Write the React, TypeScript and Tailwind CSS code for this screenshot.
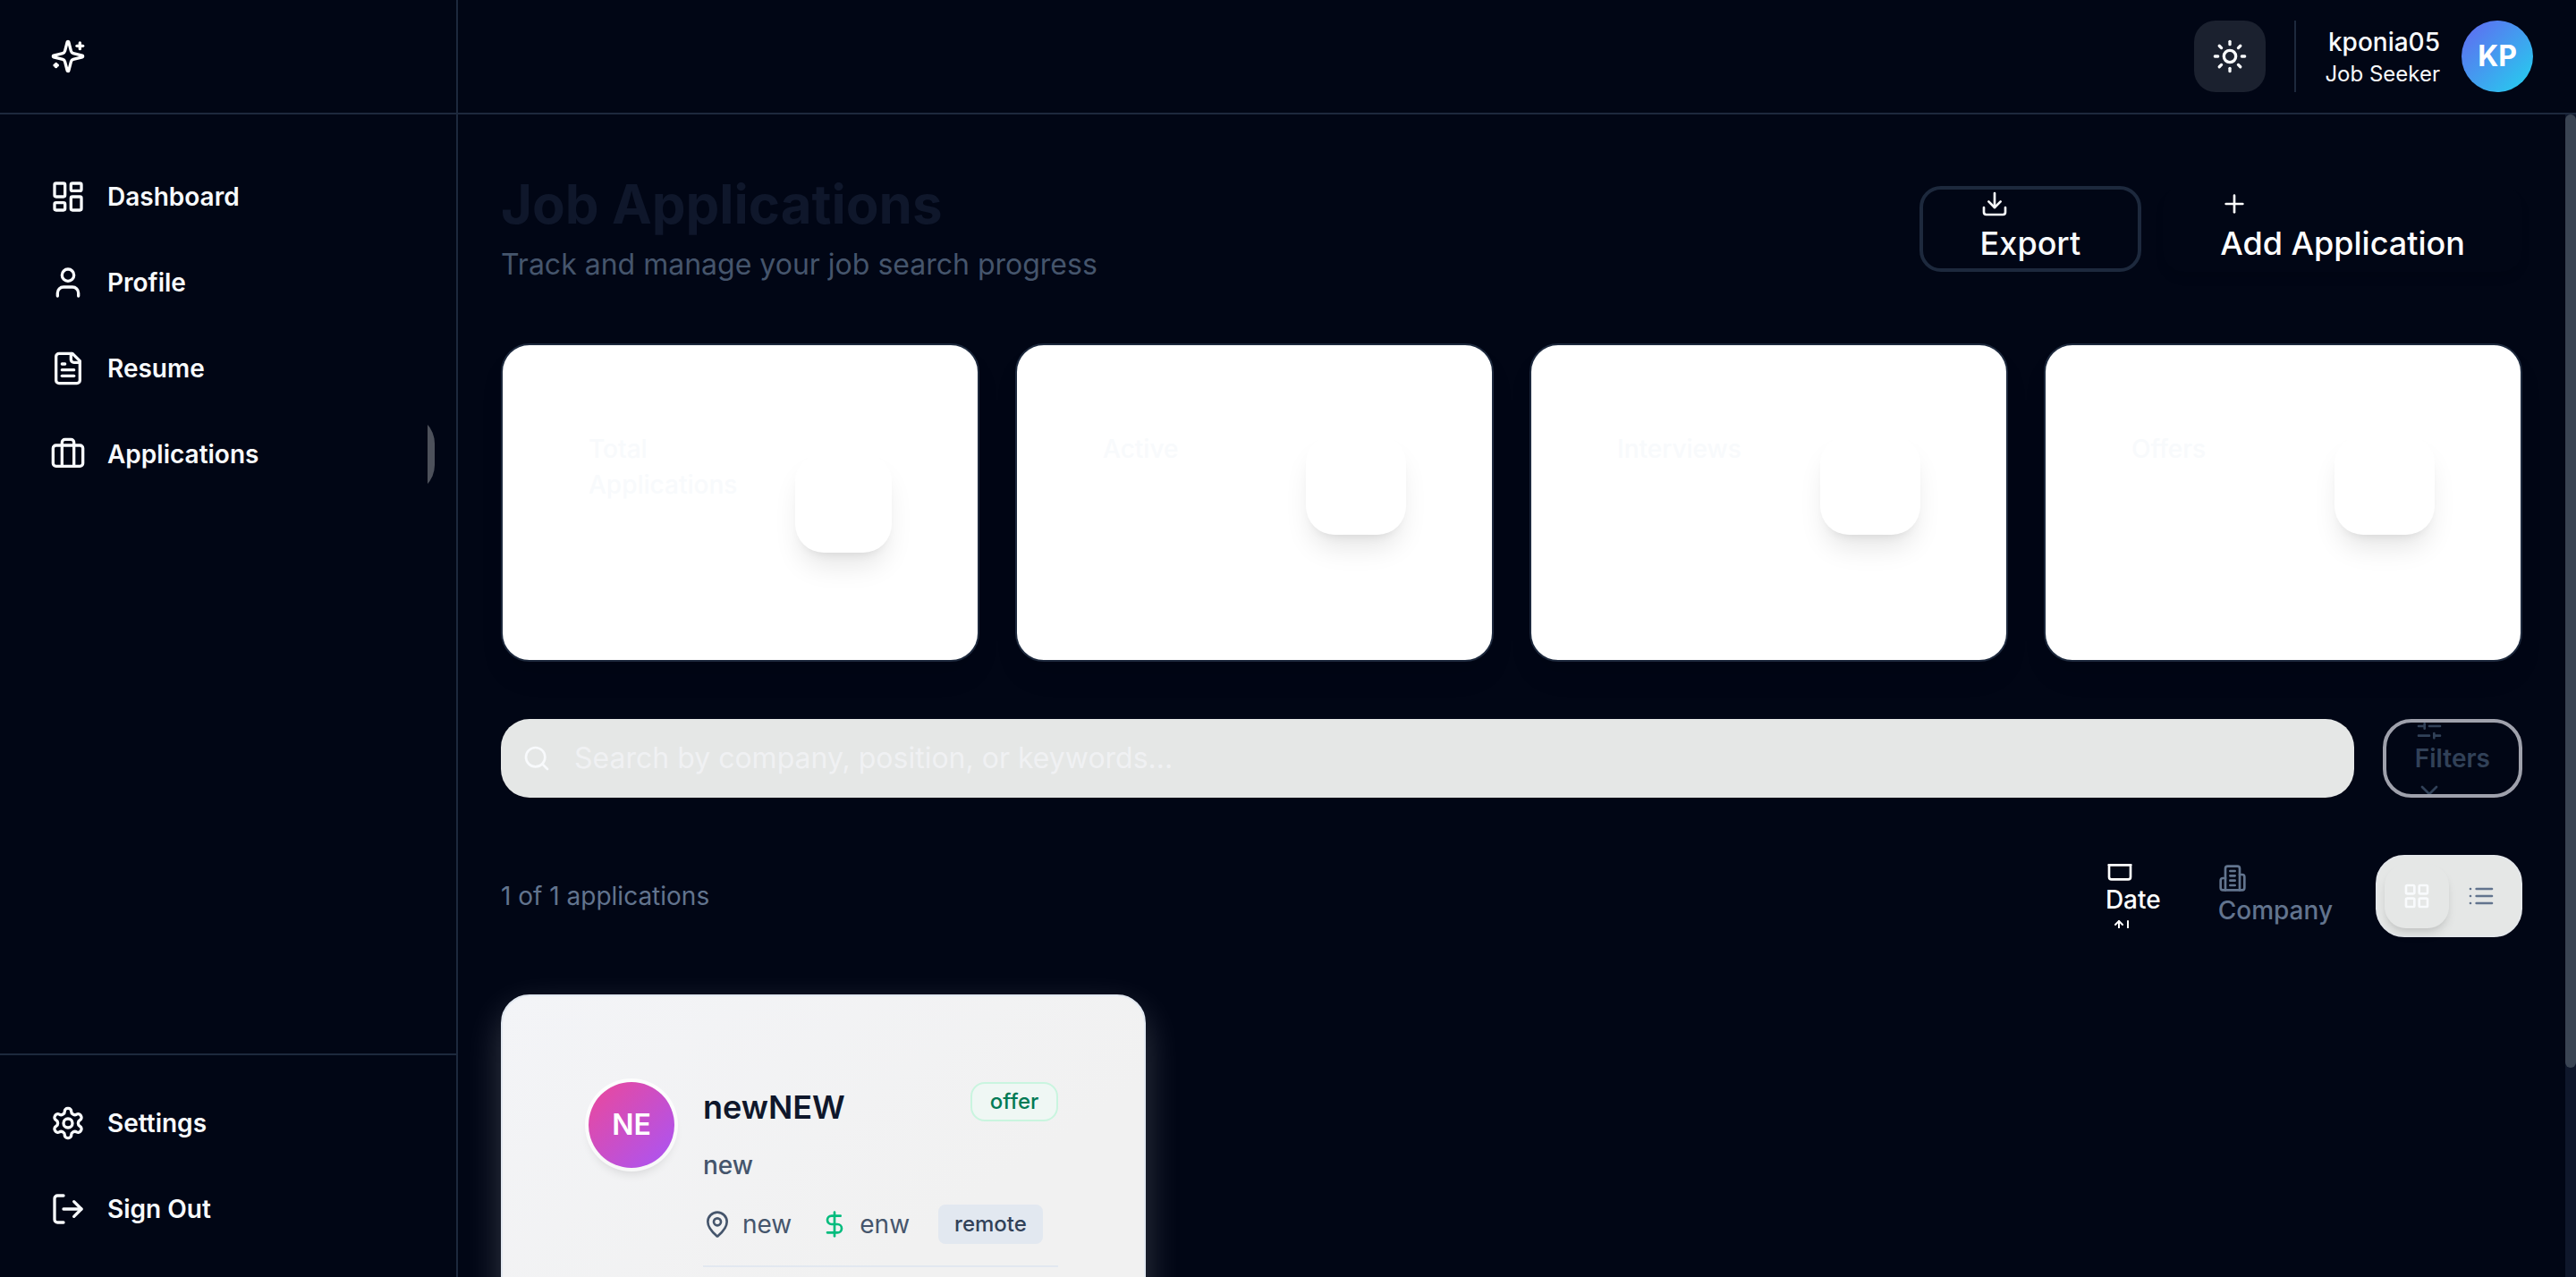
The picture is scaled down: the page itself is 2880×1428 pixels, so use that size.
import type { ReactNode } from "react";

type IconProps = { className?: string; children?: ReactNode };

function Icon({ className = "size-8", children }: IconProps) {
  return (
    <svg
      aria-hidden="true"
      viewBox="0 0 24 24"
      fill="none"
      stroke="currentColor"
      strokeWidth="2"
      strokeLinecap="round"
      strokeLinejoin="round"
      className={`shrink-0 ${className}`}
    >
      {children}
    </svg>
  );
}

const navIcons = {
  dashboard: (
    <>
      <rect width="7" height="9" x="3" y="3" rx="1" />
      <rect width="7" height="5" x="14" y="3" rx="1" />
      <rect width="7" height="9" x="14" y="12" rx="1" />
      <rect width="7" height="5" x="3" y="16" rx="1" />
    </>
  ),
  profile: (
    <>
      <path d="M19 21v-2a4 4 0 0 0-4-4H9a4 4 0 0 0-4 4v2" />
      <circle cx="12" cy="7" r="4" />
    </>
  ),
  resume: (
    <>
      <path d="M15 2H6a2 2 0 0 0-2 2v16a2 2 0 0 0 2 2h12a2 2 0 0 0 2-2V7Z" />
      <path d="M14 2v4a2 2 0 0 0 2 2h4" />
      <path d="M10 9H8" />
      <path d="M16 13H8" />
      <path d="M16 17H8" />
    </>
  ),
  applications: (
    <>
      <path d="M16 20V4a2 2 0 0 0-2-2h-4a2 2 0 0 0-2 2v16" />
      <rect width="20" height="14" x="2" y="6" rx="2" />
    </>
  ),
  settings: (
    <>
      <path d="M12.22 2h-.44a2 2 0 0 0-2 2v.18a2 2 0 0 1-1 1.73l-.43.25a2 2 0 0 1-2 0l-.15-.08a2 2 0 0 0-2.73.73l-.22.38a2 2 0 0 0 .73 2.73l.15.1a2 2 0 0 1 1 1.72v.51a2 2 0 0 1-1 1.74l-.15.09a2 2 0 0 0-.73 2.73l.22.38a2 2 0 0 0 2.73.73l.15-.08a2 2 0 0 1 2 0l.43.25a2 2 0 0 1 1 1.73V20a2 2 0 0 0 2 2h.44a2 2 0 0 0 2-2v-.18a2 2 0 0 1 1-1.73l.43-.25a2 2 0 0 1 2 0l.15.08a2 2 0 0 0 2.73-.73l.22-.39a2 2 0 0 0-.73-2.73l-.15-.08a2 2 0 0 1-1-1.74v-.5a2 2 0 0 1 1-1.74l.15-.09a2 2 0 0 0 .73-2.73l-.22-.38a2 2 0 0 0-2.73-.73l-.15.08a2 2 0 0 1-2 0l-.43-.25a2 2 0 0 1-1-1.73V4a2 2 0 0 0-2-2z" />
      <circle cx="12" cy="12" r="3" />
    </>
  ),
  signOut: (
    <>
      <path d="M9 21H5a2 2 0 0 1-2-2V5a2 2 0 0 1 2-2h4" />
      <path d="m16 17 5-5-5-5" />
      <path d="M21 12H9" />
    </>
  ),
};

type NavLinkProps = { label: string; icon: ReactNode; active?: boolean };

function NavLink({ label, icon, active = false }: NavLinkProps) {
  return (
    <a
      href="#"
      aria-current={active ? "page" : undefined}
      className="relative flex h-22 items-center gap-6 overflow-hidden rounded-4xl px-8 text-[28px] leading-10 font-semibold text-slate-50"
    >
      <Icon className="size-10">{icon}</Icon>
      {label}
      {active && <span className="absolute inset-y-0 right-0 w-2 bg-white/30" />}
    </a>
  );
}

function Sidebar() {
  return (
    <aside className="flex w-128 shrink-0 flex-col border-r-2 border-slate-800">
      <div className="flex h-32 shrink-0 items-center border-b-2 border-slate-800 px-14 text-white">
        <Icon className="size-10">
          <path d="M9.937 15.5A2 2 0 0 0 8.5 14.063l-6.135-1.582a.5.5 0 0 1 0-.962L8.5 9.936A2 2 0 0 0 9.937 8.5l1.582-6.135a.5.5 0 0 1 .963 0L14.063 8.5A2 2 0 0 0 15.5 9.937l6.135 1.581a.5.5 0 0 1 0 .964L15.5 14.063a2 2 0 0 0-1.437 1.437l-1.582 6.135a.5.5 0 0 1-.963 0z" />
          <path d="M20 3v4" />
          <path d="M22 5h-4" />
          <path d="M4 17v2" />
          <path d="M5 18H3" />
        </Icon>
      </div>
      <nav aria-label="Main" className="flex flex-1 flex-col gap-2 px-6 py-12">
        <NavLink label="Dashboard" icon={navIcons.dashboard} />
        <NavLink label="Profile" icon={navIcons.profile} />
        <NavLink label="Resume" icon={navIcons.resume} />
        <NavLink label="Applications" icon={navIcons.applications} active />
      </nav>
      <nav aria-label="Account" className="flex flex-col gap-2 border-t-2 border-slate-800 px-6 py-8">
        <NavLink label="Settings" icon={navIcons.settings} />
        <NavLink label="Sign Out" icon={navIcons.signOut} />
      </nav>
    </aside>
  );
}

function Header() {
  return (
    <header className="flex h-32 shrink-0 items-center justify-end gap-8 border-b-2 border-slate-800 px-12">
      <button
        type="button"
        aria-label="Toggle theme"
        className="flex size-20 items-center justify-center rounded-3xl bg-[#1b212f] text-slate-50"
      >
        <Icon className="size-10">
          <circle cx="12" cy="12" r="4" />
          <path d="M12 2v2" />
          <path d="M12 20v2" />
          <path d="m4.93 4.93 1.41 1.41" />
          <path d="m17.66 17.66 1.41 1.41" />
          <path d="M2 12h2" />
          <path d="M20 12h2" />
          <path d="m6.34 17.66-1.41 1.41" />
          <path d="m19.07 4.93-1.41 1.41" />
        </Icon>
      </button>
      <div className="flex items-center gap-6 border-l-2 border-slate-800 pl-8">
        <div className="text-right text-slate-50">
          <p className="text-[28px] leading-10 font-medium">kponia05</p>
          <p className="text-2xl leading-8">Job Seeker</p>
        </div>
        <div className="flex size-20 items-center justify-center rounded-full bg-linear-to-br/srgb from-[#6366f1] to-[#22d3ee] text-[32px] font-bold text-white">
          KP
        </div>
      </div>
    </header>
  );
}

function StatCard({ label }: { label: string }) {
  return (
    <section className="flex h-89 items-start rounded-4xl border-2 border-slate-800 bg-white p-24 shadow-[0_20px_30px_-6px_rgb(0_0_0/0.1)]">
      <div className="flex w-full items-center justify-between">
        <p className="pb-20 text-[28px] leading-10 font-medium text-slate-50">{label}</p>
        <div className="h-28 w-28 rounded-4xl bg-white shadow-[0_20px_30px_-6px_rgb(0_0_0/0.1),0_8px_12px_-8px_rgb(0_0_0/0.1)]" />
      </div>
    </section>
  );
}

function JobCard() {
  return (
    <article className="rounded-4xl border-2 border-slate-200 bg-linear-to-br from-[#f3f4f7] to-[#f1f1f1] to-60% p-24 shadow-[0_16px_40px_rgb(255_255_255/0.2)]">
      <div className="flex items-start gap-8">
        <div className="flex size-24 shrink-0 items-center justify-center rounded-full bg-linear-to-br/srgb from-[#ec4899] to-[#a855f7] text-[32px] font-semibold text-white shadow-[0_8px_12px_-2px_rgb(0_0_0/0.12)] ring-4 ring-white/80">
          NE
        </div>
        <div className="min-w-0 flex-1">
          <div className="flex items-start justify-between">
            <h2 className="text-4xl leading-14 font-semibold text-slate-900">newNEW</h2>
            <span className="flex h-11 items-center rounded-2xl border-2 border-[#c9f5df] bg-[#eff7f4] px-5 text-2xl leading-8 font-medium text-emerald-700">
              offer
            </span>
          </div>
          <p className="mt-[17px] text-[28px] leading-10 font-medium text-slate-600">new</p>
          <div className="mt-6 flex items-center gap-8 text-[28px] leading-10 text-slate-600">
            <span className="flex items-center gap-3">
              <Icon>
                <path d="M20 10c0 4.993-5.539 10.193-7.399 11.799a1 1 0 0 1-1.202 0C9.539 20.193 4 14.993 4 10a8 8 0 0 1 16 0" />
                <circle cx="12" cy="10" r="3" />
              </Icon>
              new
            </span>
            <span className="flex items-center gap-3">
              <Icon className="size-8 text-emerald-500">
                <path d="M12 2v20" />
                <path d="M17 5H9.5a3.5 3.5 0 0 0 0 7h5a3.5 3.5 0 0 1 0 7H6" />
              </Icon>
              enw
            </span>
            <span className="flex h-11 items-center rounded-lg border-2 border-slate-200 bg-slate-200 px-4 text-2xl leading-8 font-medium text-slate-700">
              remote
            </span>
          </div>
          <div className="mt-6 border-t-2 border-slate-200 pt-24" />
        </div>
      </div>
    </article>
  );
}

export default function App() {
  return (
    <div className="flex h-screen overflow-hidden bg-[#010615] font-['Inter',sans-serif] antialiased">
      <Sidebar />
      <div className="flex min-w-0 flex-1 flex-col">
        <Header />
        <div className="flex min-h-0 flex-1">
          <main className="min-w-0 flex-1 overflow-hidden px-12 pt-16">
            <div className="flex h-32 items-center justify-between">
              <div>
                <h1 className="text-6xl leading-18 font-bold text-slate-900">Job Applications</h1>
                <p className="mt-2 text-[32px] leading-12 text-slate-600">Track and manage your job search progress</p>
              </div>
              <div className="flex items-center gap-6 text-4xl leading-14 font-medium">
                <button
                  type="button"
                  className="flex h-24 flex-col items-start justify-center overflow-hidden rounded-3xl border-4 border-slate-800 px-16 text-slate-50"
                >
                  <Icon>
                    <path d="M21 15v4a2 2 0 0 1-2 2H5a2 2 0 0 1-2-2v-4" />
                    <path d="m7 10 5 5 5-5" />
                    <path d="M12 15V3" />
                  </Icon>
                  Export
                </button>
                <button
                  type="button"
                  className="flex h-24 flex-col items-start justify-center rounded-3xl px-16 text-white shadow-[0_8px_12px_-2px_rgb(0_0_0/0.1)]"
                >
                  <Icon>
                    <path d="M5 12h14" />
                    <path d="M12 5v14" />
                  </Icon>
                  Add Application
                </button>
              </div>
            </div>

            <div className="mt-16 grid grid-cols-4 gap-10">
              <StatCard label="Total Applications" />
              <StatCard label="Active" />
              <StatCard label="Interviews" />
              <StatCard label="Offers" />
            </div>

            <div className="mt-16 flex items-center gap-8">
              <label className="flex h-22 min-w-0 flex-1 items-center gap-6 rounded-4xl bg-[#e5e7e6] px-6 text-slate-50">
                <Icon>
                  <circle cx="11" cy="11" r="8" />
                  <path d="m21 21-4.3-4.3" />
                </Icon>
                <input
                  type="text"
                  aria-label="Search applications"
                  placeholder="Search by company, position, or keywords..."
                  className="min-w-0 flex-1 border-2 border-transparent bg-transparent text-[32px] leading-12 text-slate-900 outline-none placeholder:text-[#f0f1f3]"
                />
              </label>
              <button
                type="button"
                className="flex h-22 flex-col items-start justify-center overflow-hidden rounded-4xl border-4 border-[#9fa1ac] px-8 text-[28px] leading-10 font-semibold text-slate-700"
              >
                <Icon>
                  <path d="M21 4h-7M10 4H3M21 12h-9M8 12H3M21 20h-5M12 20H3" />
                  <path d="M14 2v4M8 10v4M16 18v4" />
                </Icon>
                Filters
                <Icon>
                  <path d="m6 9 6 6 6-6" />
                </Icon>
              </button>
            </div>

            <div className="mt-16 flex items-center justify-between">
              <p className="text-[28px] leading-10 text-slate-500">1 of 1 applications</p>
              <div className="flex items-center gap-6 text-[28px] leading-10 font-medium">
                <div className="flex items-center gap-4">
                  <button
                    type="button"
                    className="flex h-18 flex-col items-start justify-center overflow-hidden px-6 text-white"
                  >
                    <Icon>
                      <path d="M8 2v4" />
                      <path d="M16 2v4" />
                      <rect width="18" height="18" x="3" y="4" rx="2" />
                      <path d="M3 10h18" />
                    </Icon>
                    Date
                    <Icon className="ml-2 size-6">
                      <path d="m21 16-4 4-4-4" />
                      <path d="M17 20V4" />
                      <path d="m3 8 4-4 4 4" />
                      <path d="M7 4v16" />
                    </Icon>
                  </button>
                  <button
                    type="button"
                    className="flex h-18 flex-col items-start justify-center overflow-hidden px-6 text-slate-500"
                  >
                    <Icon>
                      <path d="M6 22V4a2 2 0 0 1 2-2h8a2 2 0 0 1 2 2v18Z" />
                      <path d="M6 12H4a2 2 0 0 0-2 2v6a2 2 0 0 0 2 2h2" />
                      <path d="M18 9h2a2 2 0 0 1 2 2v9a2 2 0 0 1-2 2h-2" />
                      <path d="M10 6h4M10 10h4M10 14h4M10 18h4" />
                    </Icon>
                    Company
                  </button>
                </div>
                <div className="flex rounded-4xl border-2 border-[#e4e7ea] bg-[#e5e7e6] p-2">
                  <button
                    type="button"
                    aria-label="Grid view"
                    className="flex size-18 items-center justify-center rounded-3xl bg-[#e5e7e6] text-slate-50 shadow-[0_8px_12px_-2px_rgb(0_0_0/0.1),0_4px_8px_-4px_rgb(0_0_0/0.1)]"
                  >
                    <Icon>
                      <rect width="7" height="7" x="3" y="3" rx="1" />
                      <rect width="7" height="7" x="14" y="3" rx="1" />
                      <rect width="7" height="7" x="14" y="14" rx="1" />
                      <rect width="7" height="7" x="3" y="14" rx="1" />
                    </Icon>
                  </button>
                  <button
                    type="button"
                    aria-label="List view"
                    className="flex size-18 items-center justify-center rounded-3xl text-slate-500"
                  >
                    <Icon>
                      <path d="M3 6h.01M3 12h.01M3 18h.01" />
                      <path d="M8 6h13M8 12h13M8 18h13" />
                    </Icon>
                  </button>
                </div>
              </div>
            </div>

            <div className="mt-16 grid grid-cols-3 gap-12">
              <JobCard />
            </div>
          </main>
          <div aria-hidden="true" className="w-3 shrink-0 bg-slate-900">
            <div className="h-[82%] rounded-full bg-[#3a4453]" />
          </div>
        </div>
      </div>
    </div>
  );
}
